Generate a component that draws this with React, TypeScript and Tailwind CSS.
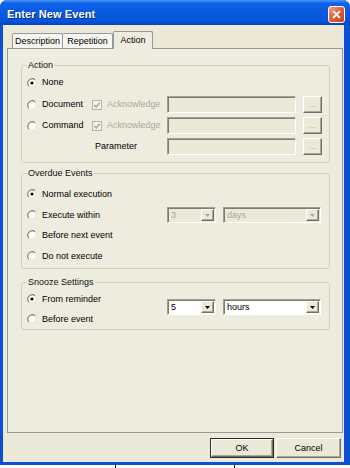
import React from "react";

const sunken =
  "border border-t-[#a19f92] border-l-[#a19f92] border-r-white border-b-white shadow-[inset_1px_1px_0_#7f7d71]";
const raised =
  "border border-t-white border-l-white border-r-[#716f64] border-b-[#716f64] shadow-[inset_-1px_-1px_0_#aca899]";

function Radio({ checked }: { checked?: boolean }) {
  return (
    <svg width="10" height="10" viewBox="0 0 10 10" className="shrink-0">
      <circle cx="5" cy="5" r="4.4" fill="#ffffff" />
      <path d="M8.1 1.9 A4.4 4.4 0 0 0 1.9 8.1" stroke="#7a786d" strokeWidth="1.1" fill="none" />
      <path d="M8.1 1.9 A4.4 4.4 0 0 1 1.9 8.1" stroke="#e4e2d6" strokeWidth="1" fill="none" />
      {checked && <circle cx="5" cy="5" r="1.6" fill="#000000" />}
    </svg>
  );
}

function DisabledCheck() {
  return (
    <svg width="10" height="10" viewBox="0 0 10 10" className="shrink-0">
      <rect x="0.5" y="0.5" width="9" height="9" fill="#f3f2ec" stroke="#b5b3a6" />
      <polyline points="2.3,5 4.2,7 7.8,2.8" fill="none" stroke="#a8a699" strokeWidth="1.5" />
    </svg>
  );
}

function RadioLabel({ label, checked }: { label: string; checked?: boolean }) {
  return (
    <div className="flex items-center gap-[5px]">
      <Radio checked={checked} />
      <span className="whitespace-nowrap">{label}</span>
    </div>
  );
}

function Arrow({ disabled }: { disabled?: boolean }) {
  return (
    <div className={`w-[13px] h-full flex items-center justify-center bg-[#ece9d8] ${raised}`}>
      <svg width="5" height="3" viewBox="0 0 5 3">
        <polygon points="0,0 5,0 2.5,3" fill={disabled ? "#aca899" : "#000000"} />
      </svg>
    </div>
  );
}

function Combo({ w, value, disabled }: { w: string; value: string; disabled?: boolean }) {
  return (
    <div className={`${w} h-[16px] flex ${sunken} ${disabled ? "bg-[#ece9d8]" : "bg-white"}`}>
      <div className={`flex-1 flex items-center pl-[3px] ${disabled ? "text-[#aca899]" : "text-black"}`}>
        {value}
      </div>
      <div className="p-px h-full">
        <Arrow disabled={disabled} />
      </div>
    </div>
  );
}

function GroupLabel({ text }: { text: string }) {
  return (
    <div className="-mt-[6px] ml-[5px] px-[1px] w-fit h-[11px] leading-[11px] bg-[#eeecdf] text-[#111]">
      {text}
    </div>
  );
}

function DotsButton() {
  return (
    <div className={`ml-[7px] w-[19px] h-[17px] flex items-end justify-center pb-[3px] text-[8px] leading-none text-[#aca899] bg-[#ece9d8] ${raised}`}>
      ...
    </div>
  );
}

export default function App() {
  return (
    <div className="w-[350px] h-[468px] bg-white font-['Liberation_Sans',Arial,sans-serif] text-[9px] leading-none text-black select-none">
      <div className="h-[465px] flex flex-col bg-[#0b4fd6] rounded-t-[7px] overflow-hidden">
        {/* Title bar */}
        <div className="h-[25px] shrink-0 flex items-center pl-[7px] pr-[5px] bg-[linear-gradient(to_bottom,#4a94f8_0%,#0d63e6_14%,#0a5be2_45%,#0656dc_80%,#0545c2_100%)]">
          <span className="text-white font-bold text-[11px] pt-[3px] tracking-[0.1px] [text-shadow:1px_1px_0_#0a2f8f]">
            Enter New Event
          </span>
          <div className="ml-auto mt-[3px] w-[17px] h-[17px] rounded-[3px] border border-white flex items-center justify-center bg-[linear-gradient(135deg,#f0a58a_0%,#e0603a_45%,#c8401b_100%)]">
            <svg width="9" height="9" viewBox="0 0 9 9">
              <path d="M1.5 1.5 L7.5 7.5 M7.5 1.5 L1.5 7.5" stroke="#ffffff" strokeWidth="1.8" strokeLinecap="round" />
            </svg>
          </div>
        </div>

        {/* Frame */}
        <div className="flex pl-[3px] pr-[6px] bg-[#0b4fd6]">
          <div className="w-[341px] h-[437px] bg-[#ece9d8] flex flex-col">
            {/* Tabs */}
            <div className="h-[23px] flex items-end pl-[9px]">
              <div className="w-[51px] h-[15px] flex items-center justify-center border-t border-l border-r border-[#919b9c] rounded-t-[2px] bg-[#f7f6f1]">
                Description
              </div>
              <div className="w-[50px] h-[15px] flex items-center justify-center border-t border-r border-[#919b9c] rounded-t-[2px] bg-[#f7f6f1]">
                Repetition
              </div>
              <div className="relative z-10 -mb-px w-[40px] h-[18px] flex items-center justify-center pb-[1px] border-t border-l border-r border-[#919b9c] rounded-t-[2px] bg-[#eeecdf]">
                Action
              </div>
            </div>

            {/* Panel */}
            <div className="ml-[4px] w-[336px] h-[385px] border border-[#919b9c] bg-[#eeecdf] flex flex-col">
              {/* Action group */}
              <div className="mt-[16px] ml-[13px] w-[309px] h-[98px] border border-[#d0d0bf] rounded-[3px] flex flex-col pl-[5px]">
                <div className="-ml-[5px]">
                  <GroupLabel text="Action" />
                </div>
                <div className="mt-[3px] h-[17px] flex items-center">
                  <RadioLabel label="None" checked />
                </div>
                <div className="mt-[5px] h-[17px] flex items-center">
                  <div className="w-[65px]">
                    <RadioLabel label="Document" />
                  </div>
                  <div className="w-[75px] flex items-center gap-[5px] text-[#aca899]">
                    <DisabledCheck />
                    <span>Acknowledge</span>
                  </div>
                  <div className={`w-[129px] h-[17px] bg-[#ece9d8] ${sunken}`} />
                  <DotsButton />
                </div>
                <div className="mt-[4px] h-[17px] flex items-center">
                  <div className="w-[65px]">
                    <RadioLabel label="Command" />
                  </div>
                  <div className="w-[75px] flex items-center gap-[5px] text-[#aca899]">
                    <DisabledCheck />
                    <span>Acknowledge</span>
                  </div>
                  <div className={`w-[129px] h-[17px] bg-[#ece9d8] ${sunken}`} />
                  <DotsButton />
                </div>
                <div className="mt-[4px] h-[17px] flex items-center">
                  <div className="w-[140px] pl-[68px]">Parameter</div>
                  <div className={`w-[129px] h-[17px] bg-[#ece9d8] ${sunken}`} />
                  <DotsButton />
                </div>
              </div>

              {/* Overdue group */}
              <div className="mt-[10px] ml-[13px] w-[309px] h-[96px] border border-[#d0d0bf] rounded-[3px] flex flex-col pl-[5px]">
                <div className="-ml-[5px]">
                  <GroupLabel text="Overdue Events" />
                </div>
                <div className="mt-[7px] h-[16px] flex items-center">
                  <RadioLabel label="Normal execution" checked />
                </div>
                <div className="mt-[5px] h-[16px] flex items-center">
                  <div className="w-[140px]">
                    <RadioLabel label="Execute within" />
                  </div>
                  <Combo w="w-[49px]" value="3" disabled />
                  <div className="ml-[7px]">
                    <Combo w="w-[98px]" value="days" disabled />
                  </div>
                </div>
                <div className="mt-[4px] h-[16px] flex items-center">
                  <RadioLabel label="Before next event" />
                </div>
                <div className="mt-[5px] h-[16px] flex items-center">
                  <RadioLabel label="Do not execute" />
                </div>
              </div>

              {/* Snooze group */}
              <div className="mt-[13px] ml-[13px] w-[309px] h-[48px] border border-[#d0d0bf] rounded-[3px] flex flex-col pl-[5px]">
                <div className="-ml-[5px]">
                  <GroupLabel text="Snooze Settings" />
                </div>
                <div className="flex items-start">
                  <div className="w-[140px] mt-[5px] flex flex-col">
                    <div className="h-[12px] flex items-center">
                      <RadioLabel label="From reminder" checked />
                    </div>
                    <div className="mt-[8px] h-[12px] flex items-center">
                      <RadioLabel label="Before event" />
                    </div>
                  </div>
                  <div className="mt-[11px] flex">
                    <Combo w="w-[49px]" value="5" />
                    <div className="ml-[7px]">
                      <Combo w="w-[98px]" value="hours" />
                    </div>
                  </div>
                </div>
              </div>
            </div>

            {/* Buttons */}
            <div className="mt-[5px] h-[20px] flex justify-end gap-[2px] pr-[3px]">
              <div className="w-[64px] h-[20px] border border-[#2b2b2b] bg-[#ece9d8]">
                <div className={`w-full h-full flex items-center justify-center ${raised}`}>OK</div>
              </div>
              <div className={`w-[65px] h-[20px] flex items-center justify-center bg-[#ece9d8] ${raised}`}>
                Cancel
              </div>
            </div>
          </div>
        </div>
      </div>
      {/* desktop strip */}
      <div className="h-[3px] flex">
        <div className="ml-[115px] w-px h-[3px] bg-black" />
        <div className="ml-[118px] w-px h-[3px] bg-black" />
      </div>
    </div>
  );
}
